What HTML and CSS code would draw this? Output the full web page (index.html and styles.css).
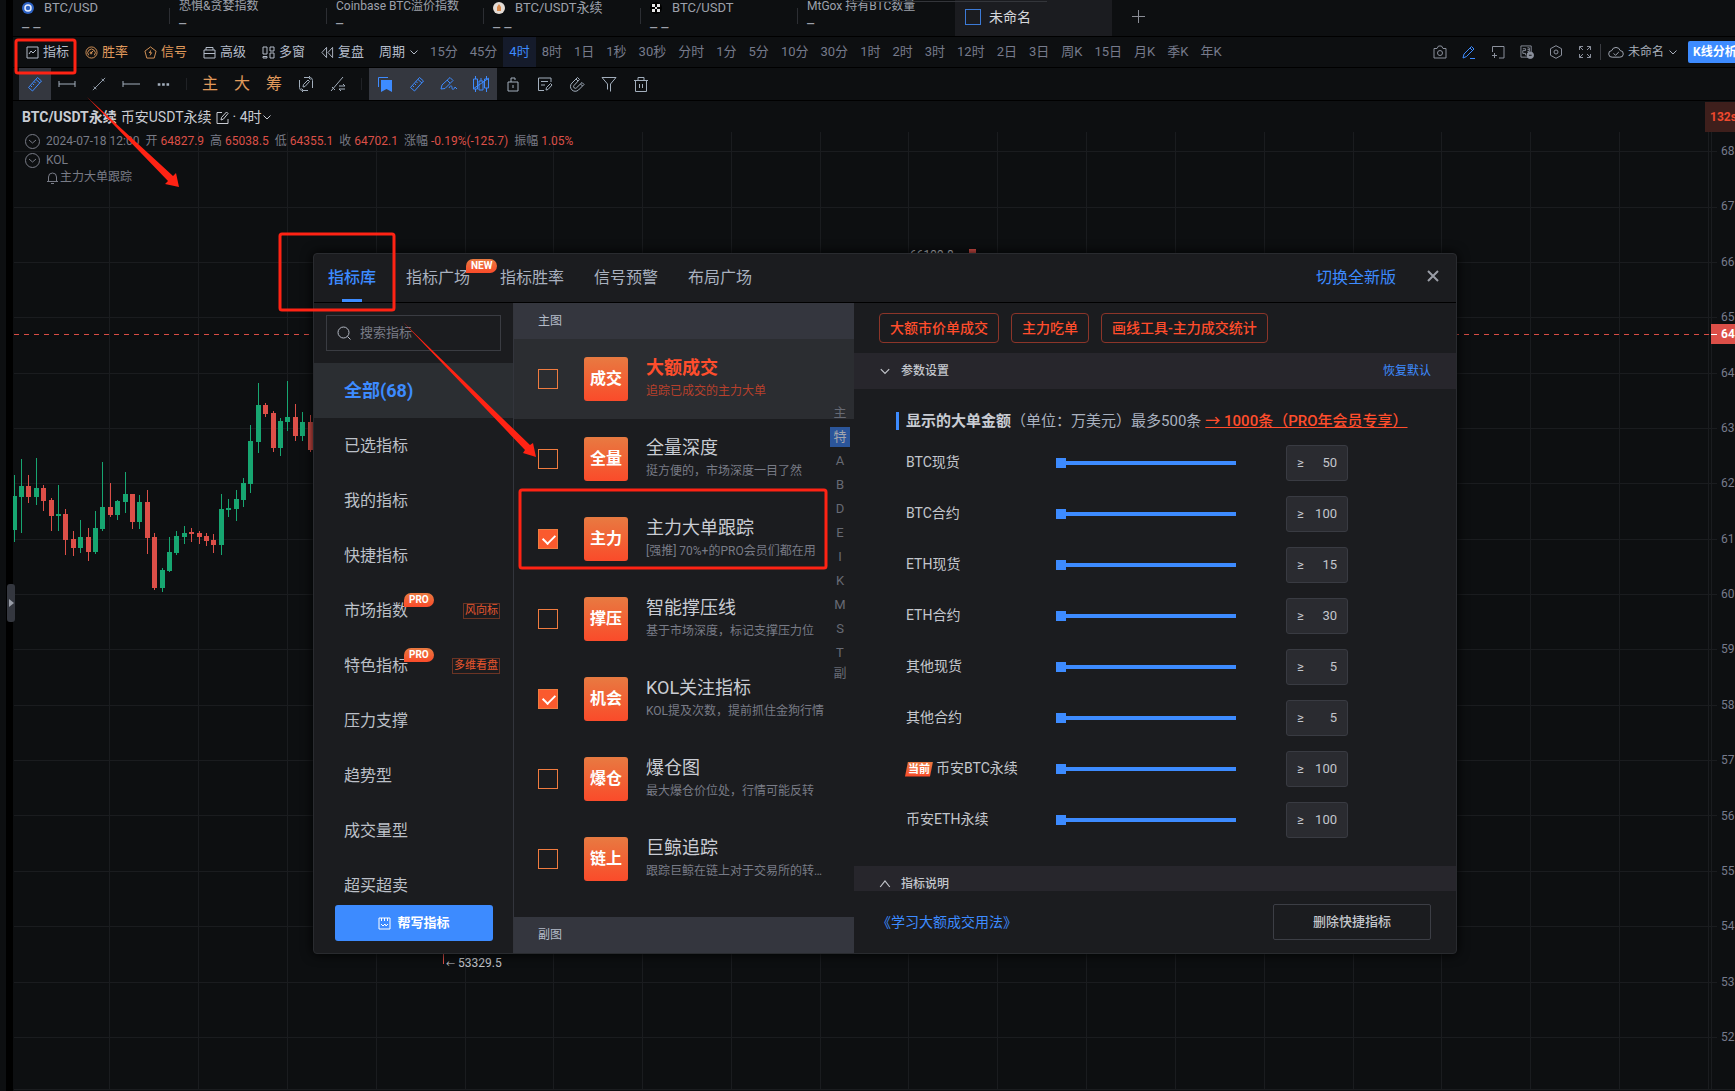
FILE: index.html
```html
<!DOCTYPE html>
<html lang="zh-CN">
<head>
<meta charset="utf-8">
<title>BTC/USDT永续 K线</title>
<link rel="stylesheet" href="styles.css">
</head>
<body>
<svg class="sprite" aria-hidden="true">
  <symbol id="i-box" viewBox="0 0 13 13"><path d="M1 1h11v11H1zM3 8l2-3 2 2 3-3"/></symbol>
  <symbol id="i-gauge" viewBox="0 0 14 14"><circle cx="7" cy="7" r="6"/><path d="M4 10a4 4 0 1 1 6 0M6.500 7.500L9 5"/><circle cx="6.500" cy="7.500" r="1"/></symbol>
  <symbol id="i-bolt" viewBox="0 0 14 14"><path d="M7 1l6 4.500-2 7.500H3L1 5.500z"/><path d="M8 3.500L5 7.500h2L6 11l3-4H7z" fill="currentColor" stroke="none"/></symbol>
  <symbol id="i-case" viewBox="0 0 13 13"><path d="M1 4h11v8H1zM3 4V1.500h7V4M1 7.500h11"/></symbol>
  <symbol id="i-panes" viewBox="0 0 13 13"><path d="M1 1h4v7H1zM1 10.500h4V12H1zM8 1h4v4H8zM8 7h4v5H8z"/></symbol>
  <symbol id="i-rewind" viewBox="0 0 14 13"><path d="M6 1v11L1 6.500zM12.500 1v11l-5-5.500z"/></symbol>
  <symbol id="i-down" viewBox="0 0 10 10"><path d="M1.500 3.500L5 7l3.500-3.500"/></symbol>
  <symbol id="i-up" viewBox="0 0 10 10"><path d="M1 7.500l4-5 4 5"/></symbol>
  <symbol id="i-camera" viewBox="0 0 14 14"><path d="M1 3.500h3L5.500 1h3L10 3.500h3V13H1z"/><circle cx="7" cy="8" r="2.500"/></symbol>
  <symbol id="i-pencil" viewBox="0 0 14 14"><path d="M2 9l7.500-7.500L12 4l-7.500 7.500L1 13zM8 3l2.500 2.500M8 13.500h5"/></symbol>
  <symbol id="i-newpane" viewBox="0 0 14 14"><path d="M1.500 7V1.500H13V13H8M1 10.500h5M3.500 8v5"/></symbol>
  <symbol id="i-alertlist" viewBox="0 0 15 15"><path d="M1 1h11v12H1zM3 4h3v2H3v3h3v2M8 3h2v4H8M8 5h2"/><circle cx="11" cy="11" r="3.500" fill="currentColor"/><path d="M9.500 11h3" stroke="#0d0f11"/></symbol>
  <symbol id="i-hex" viewBox="0 0 14 14"><path d="M7 .700l5.500 3v6.600L7 13.300l-5.500-3V3.700z"/><circle cx="7" cy="7" r="2"/></symbol>
  <symbol id="i-full" viewBox="0 0 14 14"><path d="M1.500 5V1.500H5M1.500 1.500L5 5M9 1.500h3.500V5M12.500 1.500L9 5M1.500 9v3.500H5M1.500 12.500L5 9M9 12.500h3.500V9M12.500 12.500L9 9"/></symbol>
  <symbol id="i-cloud" viewBox="0 0 17 14"><path d="M4.500 12.500a3.500 3.500 0 0 1-.500-7 4.700 4.700 0 0 1 9 0 3.500 3.500 0 0 1-.500 7zM6 8.500l2 2L11.500 7"/></symbol>
  <symbol id="i-ruler" viewBox="0 0 16 16"><path d="M1.500 11.500l9-10 4 3.500-9 10zM9 3.500l4 3.500M3.500 9.500l1.500 1.500M5.500 7.500l1.500 1.500M7 5.500L8.500 7"/></symbol>
  <symbol id="i-hseg" viewBox="0 0 18 16"><path d="M1 8h16M1 5v6M17 5v6"/></symbol>
  <symbol id="i-seg" viewBox="0 0 16 16"><path d="M1 15L15 1M2 11l3 3M11 2l3 3"/></symbol>
  <symbol id="i-ray" viewBox="0 0 18 16"><path d="M1 8h17M1 5v6"/></symbol>
  <symbol id="i-dots" viewBox="0 0 14 16"><path d="M1 7h3v3H1zM6 7h3v3H6zM11 7h3v3h-3z" fill="currentColor" stroke="none"/></symbol>
  <symbol id="i-rotate" viewBox="0 0 16 16"><path d="M6 1.500h5.500a3 3 0 0 1 3 3V12M12.500 3.500l-2-2 2-2M10 14.500H4.500a3 3 0 0 1-3-3V4M3.500 12.500l2 2-2 2M5 11l.500-2.500L10 4l1.500 1.500L7 10.500z"/></symbol>
  <symbol id="i-linecfg" viewBox="0 0 16 16"><path d="M1 15L13 1M2 11l3 3M9 10h6l-2-2M15 13H9l2 2"/></symbol>
  <symbol id="i-mark" viewBox="0 0 16 16"><path d="M1.500 11V1.500H11"/><path d="M4 4h11v12l-5.500-3L4 16z" fill="currentColor" stroke="none"/></symbol>
  <symbol id="i-scribble" viewBox="0 0 18 16"><path d="M1 13l1-4 8-7.500 3 3-8 8zM7 4l3 3M9 12c2-4 3-2 3 0s2 2 3-1l2 2"/></symbol>
  <symbol id="i-candles" viewBox="0 0 18 16"><path d="M1.500 3h4v10h-4zM3.500 0v3M3.500 13v3M7 5h4v9H7zM9 2v3M12.500 3h4v9h-4zM14.500 0v3M14.500 12v4M1 13L17 2"/></symbol>
  <symbol id="i-lock" viewBox="0 0 14 16"><path d="M2 6h10v9H2zM5 6V2h4v2M7 9v3"/></symbol>
  <symbol id="i-note" viewBox="0 0 16 16"><path d="M14 6V2H1.500v12.500H7M4 5.500h7M4 9h4M9 14l.500-2.500 4-4 1.500 1.500-4 4.500z"/></symbol>
  <symbol id="i-magnet" viewBox="0 0 16 16"><path d="M8.500 1.500L3 7a4.700 4.700 0 0 0 6.500 7L15 8.500l-2-2-5.500 5.300a1.700 1.700 0 0 1-2.500-2.300L10.500 3.500zM7 3l2 2M11.500 8l2 2"/></symbol>
  <symbol id="i-funnel" viewBox="0 0 16 16"><path d="M1 1.500h14L9.500 8v7.500M1 1.500L6.500 8v5.500"/></symbol>
  <symbol id="i-trash" viewBox="0 0 16 16"><path d="M1 4.500h14M5 4.500v-3h6v3M2.500 4.500v11h11v-11M6.500 8v4M9.500 8v4"/></symbol>
  <symbol id="i-edit" viewBox="0 0 13 13"><path d="M6 1.500H1v11h11V8M5 9l.500-2.500L10.500 1 12 2.500 7.500 8z"/></symbol>
  <symbol id="i-fold" viewBox="0 0 15 15"><circle cx="7.500" cy="7.500" r="7"/><path d="M4 6l3.500 3L11 6"/></symbol>
  <symbol id="i-bell" viewBox="0 0 13 13"><path d="M1 10.500h11M2.500 10.500V6a4 4 0 0 1 8 0v4.500M5 12.500h3"/></symbol>
  <symbol id="i-search" viewBox="0 0 14 14"><circle cx="6.500" cy="6.500" r="5.500"/><path d="M10.500 10.500L13.500 13.500"/></symbol>
  <symbol id="i-close" viewBox="0 0 12 12"><path d="M1 1l10 10M11 1L1 11"/></symbol>
  <symbol id="i-script" viewBox="0 0 13 13"><path d="M1 1h11v11H1zM3.500 1v3M6.500 1v3M9.500 1v3M3 7l2 2 2-2 1 2 2-2"/></symbol>
</svg>

<aside class="rail"></aside>
<main class="app">
  <nav class="pairs">
    <a class="pair" href="#"><span class="pair-name"><svg class="coin" viewBox="0 0 12 12"><circle cx="6" cy="6" r="6" fill="#2d62c4"/><circle cx="6" cy="6" r="3" fill="none" stroke="#e8eefc" stroke-width="1.500"/></svg>BTC/USD</span><span class="pair-val">_ _</span></a>
    <a class="pair index" href="#"><span class="pair-name">恐惧&amp;贪婪指数</span><span class="pair-val">_</span></a>
    <a class="pair index" href="#"><span class="pair-name">Coinbase BTC溢价指数</span><span class="pair-val">_</span></a>
    <a class="pair" href="#"><span class="pair-name"><svg class="coin" viewBox="0 0 12 12"><circle cx="6" cy="6" r="6" fill="#e4dcd6"/><path d="M4 5l2-3 2 3v4H4z" fill="#d98a4e"/></svg>BTC/USDT永续</span><span class="pair-val">_ _</span></a>
    <a class="pair" href="#"><span class="pair-name"><svg class="coin" viewBox="0 0 12 12"><circle cx="6" cy="6" r="6" fill="#000"/><path d="M2 2h3v3H2zM7 2h3v3H7zM5 5h2v2H5zM2 7h3v3H2zM7 7h3v3H7z" fill="#e6e6e6"/></svg>BTC/USDT</span><span class="pair-val">_ _</span></a>
    <a class="pair index last" href="#"><span class="pair-name">MtGox 持有BTC数量</span><span class="pair-val">_</span></a>
    <a class="pair-active" href="#"><i class="swatch"></i>未命名</a>
    <button class="pair-add" aria-label="新建"><svg class="ico" viewBox="0 0 13 13"><path d="M0 6.500h13M6.500 0v13"/></svg></button>
    <i class="peek"></i>
  </nav>

  <div class="toolbar">
    <button class="tool"><svg class="ico s13"><use href="#i-box"/></svg>指标</button>
    <button class="tool gold"><svg class="ico s13"><use href="#i-gauge"/></svg>胜率</button>
    <button class="tool gold"><svg class="ico s13"><use href="#i-bolt"/></svg>信号</button>
    <button class="tool"><svg class="ico s13"><use href="#i-case"/></svg>高级</button>
    <button class="tool"><svg class="ico s13"><use href="#i-panes"/></svg>多窗</button>
    <button class="tool"><svg class="ico s13"><use href="#i-rewind"/></svg>复盘</button>
    <button class="tool period">周期<svg class="ico s10"><use href="#i-down"/></svg></button>
    <div class="frames">
      <button>15分</button><button>45分</button><button class="on">4时</button><button>8时</button><button>1日</button><button>1秒</button><button>30秒</button><button>分时</button><button>1分</button><button>5分</button><button>10分</button><button>30分</button><button>1时</button><button>2时</button><button>3时</button><button>12时</button><button>2日</button><button>3日</button><button>周K</button><button>15日</button><button>月K</button><button>季K</button><button>年K</button>
    </div>
    <div class="utils">
      <button aria-label="截图"><svg class="ico s14"><use href="#i-camera"/></svg></button>
      <button class="blue" aria-label="画线"><svg class="ico s14"><use href="#i-pencil"/></svg></button>
      <button aria-label="新窗口"><svg class="ico s14"><use href="#i-newpane"/></svg></button>
      <button aria-label="预警"><svg class="ico s14"><use href="#i-alertlist"/></svg></button>
      <button aria-label="设置"><svg class="ico s14"><use href="#i-hex"/></svg></button>
      <button aria-label="全屏"><svg class="ico s14"><use href="#i-full"/></svg></button>
    </div>
    <button class="layout"><svg class="ico s16"><use href="#i-cloud"/></svg>未命名<svg class="ico s10"><use href="#i-down"/></svg></button>
    <button class="analyze">K线分析</button>
  </div>

  <div class="drawbar">
    <button class="on" aria-label="尺"><svg class="ico s16"><use href="#i-ruler"/></svg></button>
    <button aria-label="水平线段"><svg class="ico s18"><use href="#i-hseg"/></svg></button>
    <button aria-label="线段"><svg class="ico s14"><use href="#i-seg"/></svg></button>
    <button aria-label="射线"><svg class="ico s18"><use href="#i-ray"/></svg></button>
    <button aria-label="更多"><svg class="ico s14"><use href="#i-dots"/></svg></button>
    <i class="div"></i>
    <button class="gold">主</button>
    <button class="gold">大</button>
    <button class="gold">筹</button>
    <button aria-label="连续画线"><svg class="ico s16"><use href="#i-rotate"/></svg></button>
    <button aria-label="线设置"><svg class="ico s16"><use href="#i-linecfg"/></svg></button>
    <i class="div"></i>
    <button class="on" aria-label="收藏"><svg class="ico s16"><use href="#i-mark"/></svg></button>
    <button class="on" aria-label="尺子"><svg class="ico s16"><use href="#i-ruler"/></svg></button>
    <button class="on" aria-label="涂鸦"><svg class="ico s18"><use href="#i-scribble"/></svg></button>
    <button class="on" aria-label="K线"><svg class="ico s18"><use href="#i-candles"/></svg></button>
    <button aria-label="锁定"><svg class="ico s16"><use href="#i-lock"/></svg></button>
    <button aria-label="备注"><svg class="ico s16"><use href="#i-note"/></svg></button>
    <button aria-label="磁吸"><svg class="ico s16"><use href="#i-magnet"/></svg></button>
    <button aria-label="筛选"><svg class="ico s16"><use href="#i-funnel"/></svg></button>
    <button aria-label="删除"><svg class="ico s16"><use href="#i-trash"/></svg></button>
  </div>

  <section class="chart">
    <svg class="plot" aria-hidden="true">
      <g transform="translate(-13 -101)">
        <path class="grid" d="M109 132V1089M198 132V1089M287 132V1089M376 132V1089M465 132V1089M553 132V1089M642 132V1089M731 132V1089M820 132V1089M908 132V1089M997 132V1089M1086 132V1089M1175 132V1089M1264 132V1089M1353 132V1089M1441 132V1089M1530 132V1089M1619 132V1089M1708 132V1089M1711 132V1089
        M14 151H1717M14 207H1717M14 262H1717M14 317H1717M14 373H1717M14 428H1717M14 483H1717M14 539H1717M14 594H1717M14 649H1717M14 705H1717M14 760H1717M14 815H1717M14 871H1717M14 926H1717M14 982H1717M14 1037H1717M14 1089H1735"/>
        <path class="price" d="M14 334H1711"/>
        <path class="up" d="M14 475V542M21 459V533M36 458V505M58 485V531M80 520V553M95 511V554M102 462V531M117 500V520M125 472V513M139 495V529M162 568V592M169 537V572M176 531V555M184 526V544M221 494V555M228 499V517M236 490V521M243 478V507M250 425V493M258 383V453M280 418V456M287 381V431M302 412V441"/>
        <path class="up body" d="M14 496V530M21 486V497M36 488V497M58 514V516M80 537V548M95 528V552M102 507V529M117 501V515M125 494V502M139 502V522M162 570V588M169 552V571M176 536V553M184 533V537M221 509V545M228 508V510M236 499V509M243 483V500M250 441V484M258 405V442M280 421V448M287 417V422M302 422V436"/>
        <path class="down" d="M28 475V503M43 485V511M51 498V531M65 509V555M73 531V556M88 528V561M110 483V517M132 494V529M147 490V554M154 533V590M191 528V542M199 531V544M206 533V546M213 534V553M265 403V417M273 411V452M295 404V441M310 415V452M443 950V964"/>
        <path class="down body" d="M28 486V497M43 488V501M51 500V516M65 514V540M73 539V548M88 537V552M110 507V515M132 494V522M147 502V538M154 537V588M191 532V534M199 533V537M206 536V541M213 540V545M265 405V414M273 413V448M295 417V436M310 422V450"/>
        <path class="down body" d="M971 249V256M973 249V256"/>
        <text class="mark" x="910" y="259">66199.8</text>
        <text class="mark" x="446" y="967"><tspan class="arrow">←</tspan> 53329.5</text>
      </g>
    </svg>

    <div class="legend">
      <h1 class="symbol"><b>BTC/USDT永续</b> 币安USDT永续<svg class="ico s13"><use href="#i-edit"/></svg><span class="tf">· 4时<svg class="ico s10"><use href="#i-down"/></svg></span></h1>
      <p class="ohlc"><svg class="ico s15"><use href="#i-fold"/></svg><span>2024-07-18 12:00</span><span>开 <em>64827.9</em></span><span>高 <em>65038.5</em></span><span>低 <em>64355.1</em></span><span>收 <em>64702.1</em></span><span>涨幅 <em>-0.19%(-125.7)</em></span><span>振幅 <em>1.05%</em></span></p>
      <p class="ohlc kol"><svg class="ico s15"><use href="#i-fold"/></svg><span>KOL</span></p>
      <p class="ohlc sub"><svg class="ico s13"><use href="#i-bell"/></svg>主力大单跟踪</p>
    </div>

    <ol class="axis"><li>68</li><li>67</li><li>66</li><li>65</li><li>64</li><li>63</li><li>62</li><li>61</li><li>60</li><li>59</li><li>58</li><li>57</li><li>56</li><li>55</li><li>54</li><li>53</li><li>52</li></ol>
    <span class="countdown">132s</span>
    <span class="last-price">64</span>
    <button class="handle" aria-label="展开"><svg viewBox="0 0 5 8"><path d="M0 0l5 4-5 4z"/></svg></button>

    <section class="dialog" role="dialog" aria-label="指标库">
      <header class="dlg-head">
        <nav class="dlg-tabs">
          <a class="on" href="#">指标库</a><a href="#">指标广场<span class="flag">NEW</span></a><a href="#">指标胜率</a><a href="#">信号预警</a><a href="#">布局广场</a>
        </nav>
        <a class="switch" href="#">切换全新版</a>
        <button class="close" aria-label="关闭"><svg class="ico s12"><use href="#i-close"/></svg></button>
      </header>
      <div class="dlg-body">
        <div class="cats">
          <label class="search"><svg class="ico s14"><use href="#i-search"/></svg><input type="text" placeholder="搜索指标" aria-label="搜索指标"></label>
          <ul class="cat-list">
            <li><a class="on" href="#">全部(68)</a></li>
            <li><a href="#">已选指标</a></li>
            <li><a href="#">我的指标</a></li>
            <li><a href="#">快捷指标</a></li>
            <li><a href="#"><span class="cat">市场指数<span class="flag">PRO</span></span><small>风向标</small></a></li>
            <li><a href="#"><span class="cat">特色指标<span class="flag">PRO</span></span><small>多维看盘</small></a></li>
            <li><a href="#">压力支撑</a></li>
            <li><a href="#">趋势型</a></li>
            <li><a href="#">成交量型</a></li>
            <li><a href="#">超买超卖</a></li>
          </ul>
          <button class="write"><svg class="ico s13"><use href="#i-script"/></svg>帮写指标</button>
        </div>

        <div class="inds">
          <h2 class="group">主图</h2>
          <ul class="ind-list">
            <li><label class="ind hot"><input type="checkbox"><span class="tile">成交</span><span class="txt"><b>大额成交</b><small>追踪已成交的主力大单</small></span></label></li>
            <li><label class="ind"><input type="checkbox"><span class="tile">全量</span><span class="txt"><b>全量深度</b><small>挺方便的，市场深度一目了然</small></span></label></li>
            <li><label class="ind"><input type="checkbox" checked><span class="tile">主力</span><span class="txt"><b>主力大单跟踪</b><small>[强推] 70%+的PRO会员们都在用</small></span></label></li>
            <li><label class="ind"><input type="checkbox"><span class="tile">撑压</span><span class="txt"><b>智能撑压线</b><small>基于市场深度，标记支撑压力位</small></span></label></li>
            <li><label class="ind"><input type="checkbox" checked><span class="tile">机会</span><span class="txt"><b>KOL关注指标</b><small>KOL提及次数，提前抓住金狗行情</small></span></label></li>
            <li><label class="ind"><input type="checkbox"><span class="tile">爆仓</span><span class="txt"><b>爆仓图</b><small>最大爆仓价位处，行情可能反转</small></span></label></li>
            <li><label class="ind"><input type="checkbox"><span class="tile">链上</span><span class="txt"><b>巨鲸追踪</b><small>跟踪巨鲸在链上对于交易所的转入转出</small></span></label></li>
          </ul>
          <h2 class="group">副图</h2>
          <nav class="letters"><a href="#">主</a><a class="on" href="#">特</a><a href="#">A</a><a href="#">B</a><a href="#">D</a><a href="#">E</a><a href="#">I</a><a href="#">K</a><a href="#">M</a><a href="#">S</a><a href="#">T</a><a class="end" href="#">副</a></nav>
        </div>

        <div class="params">
          <div class="scroll">
            <div class="tags"><button>大额市价单成交</button><button>主力吃单</button><button>画线工具-主力成交统计</button></div>
            <div class="fold"><svg class="ico s12"><use href="#i-down"/></svg><h3>参数设置</h3><a href="#">恢复默认</a></div>
            <div class="form">
              <h4 class="form-title"><b>显示的大单金额</b><span>（单位：万美元）</span><span>最多500条</span><a href="#">→ 1000条（PRO年会员专享）</a></h4>
              <div class="row"><label for="r1">BTC现货</label><input id="r1" type="range" value="0"><span class="num">≥<input type="text" value="50" aria-label="BTC现货"></span></div>
              <div class="row"><label for="r2">BTC合约</label><input id="r2" type="range" value="0"><span class="num">≥<input type="text" value="100" aria-label="BTC合约"></span></div>
              <div class="row"><label for="r3">ETH现货</label><input id="r3" type="range" value="0"><span class="num">≥<input type="text" value="15" aria-label="ETH现货"></span></div>
              <div class="row"><label for="r4">ETH合约</label><input id="r4" type="range" value="0"><span class="num">≥<input type="text" value="30" aria-label="ETH合约"></span></div>
              <div class="row"><label for="r5">其他现货</label><input id="r5" type="range" value="0"><span class="num">≥<input type="text" value="5" aria-label="其他现货"></span></div>
              <div class="row"><label for="r6">其他合约</label><input id="r6" type="range" value="0"><span class="num">≥<input type="text" value="5" aria-label="其他合约"></span></div>
              <div class="row"><label for="r7"><span class="now">当前</span>币安BTC永续</label><input id="r7" type="range" value="0"><span class="num">≥<input type="text" value="100" aria-label="币安BTC永续"></span></div>
              <div class="row"><label for="r8">币安ETH永续</label><input id="r8" type="range" value="0"><span class="num">≥<input type="text" value="100" aria-label="币安ETH永续"></span></div>
            </div>
            <div class="fold"><svg class="ico s12"><use href="#i-up"/></svg><h3>指标说明</h3></div>
          </div>
          <footer class="dlg-foot"><a href="#">《学习大额成交用法》</a><button>删除快捷指标</button></footer>
        </div>
      </div>
    </section>
  </section>

  <svg class="notes" aria-hidden="true">
    <g class="frame"><rect x="16" y="40" width="59" height="33" rx="2"/><rect x="280" y="234" width="114" height="76" rx="2"/><rect x="520" y="490" width="306" height="78" rx="2"/></g>
    <path d="M87 97L173 176L176 173L179 187L165 184L168 181z"/>
    <path d="M403 322L530 445L533 443L536 457L523 453L525 450z"/>
  </svg>
</main>
</body>
</html>
```
FILE: styles.css
```css
* { box-sizing: border-box; }
body {
  margin: 0; min-height: 100vh; display: flex; position: relative; overflow: hidden;
  background: #0d0f11; color: #c3c6cc;
  font: 13px/16px Roboto, "Noto Sans CJK SC", sans-serif;
}
ul, ol { margin: 0; padding: 0; list-style: none; }
h1, h2, h3, h4, p { margin: 0; font-weight: 400; }
a { color: inherit; text-decoration: none; }
button { margin: 0; padding: 0; border: 0; background: none; color: inherit; font: inherit; white-space: nowrap; }
input { font: inherit; color: inherit; }
i, em { font-style: normal; }
.sprite { position: absolute; width: 0; height: 0; }

.ico { flex: none; display: block; width: 13px; height: 13px; fill: none; stroke: currentColor; stroke-width: 1; }
.s10 { width: 10px; height: 10px; }
.s12 { width: 12px; height: 12px; }
.s13 { width: 13px; height: 13px; }
.s14 { width: 14px; height: 14px; }
.s15 { width: 15px; height: 15px; }
.s16 { width: 16px; height: 16px; }
.s18 { width: 18px; height: 16px; }

.rail { flex: none; width: 13px; border-right: 7px solid #000; }
.app { flex: 1; min-width: 0; display: flex; flex-direction: column; }

/* symbol tabs */
.pairs { position: relative; display: flex; height: 37px; border-bottom: 1px solid #000; overflow: hidden; color: #9da1ab; }
.pair { flex: none; width: 157px; padding-left: 9px; display: flex; flex-direction: column; font-size: 13px;
  background: linear-gradient(#2c2e33, #2c2e33) right 8px / 1px 16px no-repeat; }
.pair.last { background: none; }
.pair-name { display: flex; align-items: center; gap: 10px; height: 16px; white-space: nowrap; }
.pair-val { height: 16px; font-size: 16px; line-height: 12px; }
.pair.index { font-size: 12px; }
.pair.index .pair-name { height: 12px; }
.coin { width: 12px; height: 12px; }
.pair-active { display: flex; align-items: center; gap: 8px; width: 157px; padding: 0 10px 3px; background: #1b1c20; font-size: 14px; color: #d6d8dc; }
.swatch { width: 16px; height: 16px; border: 1px solid #3c7ad6; }
.pair-add { padding: 0 20px 3px; color: #8a8d96; }
.peek { position: absolute; top: 0; left: 837px; width: 197px; height: 2px; border-bottom: 1px solid #33353a; border-left: 1px solid #33353a; }

/* toolbar */
.toolbar { display: flex; align-items: center; height: 31px; padding-left: 13px; border-bottom: 1px solid #000; color: #b4bcc9; overflow: hidden; }
.tool { display: flex; align-items: center; gap: 4px; margin-right: 16px; }
.tool.period { margin: 0 5px 0 -1px; }
.gold { color: #e09a5c; }
.frames { flex: 1; display: flex; align-self: stretch; color: #777b8c; }
.frames button { padding: 0 6px; }
.frames .on { background: #151b2b; color: #3d8bff; }
.utils { display: flex; gap: 15px; padding-right: 8px; color: #8b909c; }
.blue { color: #3d8bff; }
.layout { display: flex; align-items: center; gap: 4px; height: 16px; padding: 0 10px 0 7px; border-left: 1px solid #3a3c42; font-size: 12px; color: #a9afbb; }
.analyze { width: 47px; height: 22px; padding-left: 5px; background: #3d8bff; border-radius: 2px 0 0 2px; color: #fff; font-size: 12px; font-weight: 700; overflow: hidden; text-align: left; }

.drawbar { display: flex; align-items: center; height: 33px; padding-left: 6px; border-bottom: 1px solid #000; color: #a3afbd; }
.drawbar button { display: grid; place-items: center; width: 32px; height: 32px; font-size: 16px; }
.drawbar .on { background: #34373f; color: #3d8bff; }
.drawbar .gold { color: #e09a5c; }
.div { width: 1px; height: 12px; margin: 0 7px; background: #202226; }

/* chart */
.chart { position: relative; flex: 1; min-height: 700px; }
.plot { position: absolute; inset: 0; width: 100%; height: 100%; }
.plot path { fill: none; shape-rendering: crispEdges; }
.grid { stroke: #1a1c1f; }
.price { stroke: #d94d45; stroke-dasharray: 5 5; }
.up { stroke: #17a671; }
.down { stroke: #dc4f48; }
.plot .body { stroke-width: 5px; }
.mark { fill: #c3c6cc; font-size: 12px; }
.arrow { font-size: 9px; }
.legend { position: relative; padding: 8px 0 0 9px; color: #787b86; font-size: 12px; }
.symbol { display: flex; align-items: center; height: 16px; font-size: 14px; color: #c9ccd3; gap: 4px; margin-bottom: 8px; }
.symbol b { font-size: 14px; }
.tf { display: flex; align-items: center; }
.ohlc { display: flex; align-items: center; gap: 6px; height: 16px; padding-left: 3px; white-space: nowrap; }
.kol { margin: 3px 0 1px; }
.ohlc em { color: #dc4f48; }
.ohlc.sub { padding-left: 24px; gap: 1px; }
.axis { position: absolute; top: 42px; right: 0; bottom: 46px; width: 14px; display: flex; flex-direction: column; justify-content: space-between; font-size: 12px; color: #777b8c; }
.countdown, .last-price { position: absolute; right: 0; overflow: hidden; font-weight: 700; }
.countdown { top: 1px; width: 30px; height: 30px; padding-left: 5px; font-size: 12px; line-height: 30px; background: #3e1f1c; color: #f0492e; }
.last-price { top: 223px; width: 24px; height: 20px; padding-left: 10px; font-size: 12px; line-height: 20px; color: #fff; background: linear-gradient(#fff, #fff) 0 10px / 6px 1px no-repeat #dc4f48; }
.handle { position: absolute; left: -6px; top: 483px; width: 8px; height: 38px; background: #34373f; border-radius: 3px; display: grid; place-items: center; }
.handle svg { width: 5px; height: 8px; fill: #9a9ea8; }

/* indicator dialog */
.dialog { position: absolute; left: 300px; top: 152px; width: 1144px; height: 701px; display: flex; flex-direction: column; background: #1b1c1f; border: 1px solid #292b2f; border-radius: 4px; box-shadow: 0 0 12px #000; overflow: hidden; }
.dlg-head { display: flex; align-items: center; height: 49px; padding: 0 17px 0 14px; border-bottom: 1px solid #000; font-size: 16px; }
.dlg-tabs { flex: 1; display: flex; gap: 30px; line-height: 48px; color: #a9b1bf; }
.dlg-tabs a { position: relative; }
.dlg-tabs .on { color: #3d8bff; font-weight: 500; background: linear-gradient(#3d8bff, #3d8bff) center bottom / 20px 3px no-repeat; }
.flag { position: absolute; left: 100%; top: 5px; height: 14px; margin-left: -4px; padding: 0 5px; border-radius: 7px 7px 7px 0; background: linear-gradient(#e87a41, #fa4b2a); color: #fff; font-size: 10px; line-height: 14px; font-weight: 700; }
.switch { color: #3d8bff; }
.close { margin: 0 0 4px 31px; color: #9a9da6; }
.close .ico { stroke-width: 2; }

.dlg-body { flex: 1; min-height: 0; display: flex; }
.cats { flex: none; width: 199px; display: flex; flex-direction: column; }
.search { display: flex; align-items: center; gap: 9px; height: 36px; margin: 12px; padding: 0 10px; border: 1px solid #3a3c42; color: #b4b9c4; }
.search input { flex: 1; min-width: 0; padding: 0; border: 0; background: none; }
.search input::placeholder { color: #787b86; opacity: 1; }
.cat-list { flex: 1; min-height: 0; overflow: hidden; font-size: 16px; color: #bcc0c8; }
.cat-list a { display: flex; align-items: center; justify-content: space-between; height: 55px; padding: 0 13px 0 30px; }
.cat-list .on { background: #2b2e32; color: #3d8bff; font-size: 18px; font-weight: 700; }
.cat { position: relative; }
.cat .flag { top: -10px; }
.cat-list small { padding: 0 1px; border: 1px solid #6b3424; color: #e8562e; font-size: 11px; line-height: 14px; }
.write { display: flex; align-items: center; justify-content: center; gap: 6px; height: 36px; margin: 12px 20px 12px 21px; border-radius: 3px; background: #3d8bff; color: #fff; font-weight: 700; }

.inds { flex: none; position: relative; width: 341px; display: flex; flex-direction: column; border-left: 1px solid #33353c; }
.group { flex: none; height: 36px; padding-left: 24px; background: #34363e; font-size: 12px; line-height: 36px; color: #b4bcc9; }
.ind-list { flex: 1; min-height: 0; overflow: hidden; }
.ind { display: flex; align-items: center; height: 80px; padding-left: 24px; }
.ind input { appearance: none; width: 20px; height: 20px; margin: 0 26px 0 0; border: 1px solid #f07b3f; }
.ind input:checked { background: #fa5a2e; }
.ind input:checked::before { content: ""; display: block; width: 6px; height: 10px; margin: 2px 0 0 6px; border: solid #fff; border-width: 0 2px 2px 0; transform: rotate(45deg); }
.tile { width: 44px; height: 44px; margin-right: 18px; border-radius: 3px; background: linear-gradient(#e87a41, #fa4b2a); color: #fff; font-size: 16px; line-height: 44px; font-weight: 700; text-align: center; }
.txt { display: flex; flex-direction: column; gap: 3px; width: 182px; padding-bottom: 4px; }
.txt b { font-size: 18px; line-height: 24px; font-weight: 400; color: #c9ccd3; }
.txt small { font-size: 12px; line-height: 16px; color: #787b86; white-space: nowrap; overflow: hidden; text-overflow: ellipsis; }
.hot { background: #2b2d31; }
.hot .txt b { color: #ff4d2c; font-weight: 700; }
.hot .txt small { color: #b8402c; }
.letters { position: absolute; top: 100px; right: 4px; width: 20px; text-align: center; color: #676a74; }
.letters a { display: block; height: 20px; margin-bottom: 4px; line-height: 20px; }
.letters .on { background: #2b559a; color: #a3a6ad; }
.letters .end { margin-top: -4px; }

.params { flex: 1; min-width: 0; display: flex; flex-direction: column; }
.scroll { flex: 1; min-height: 0; overflow: hidden; }
.tags { display: flex; gap: 12px; padding: 10px 25px; }
.tags button { height: 30px; padding: 0 10px; border: 1px solid #8c3529; border-radius: 4px; color: #ff4d2c; font-size: 14px; font-weight: 500; }
.fold { display: flex; align-items: center; gap: 10px; height: 36px; padding: 0 25px; background: #27262c; font-size: 12px; }
.fold h3 { flex: 1; font-size: 12px; font-weight: 500; }
.fold a { color: #3d8bff; }
.form { padding: 23px 0 21px 42px; font-size: 14px; }
.form-title { display: flex; height: 18px; margin-bottom: 7px; padding-left: 7px; border-left: 3px solid #3d8bff; font-size: 15px; line-height: 18px; color: #a9b1bf; white-space: nowrap; }
.form-title b { color: #c9ccd3; }
.form-title a { margin-left: 4px; color: #ff4d2c; text-decoration: underline; font-weight: 500; }
.row { display: flex; align-items: center; height: 51px; padding-left: 10px; }
.row label { width: 150px; padding-bottom: 1px; }
.row input[type=range] { appearance: none; width: 180px; height: 10px; margin: 0 50px 0 0; background: linear-gradient(#3d8bff, #3d8bff) center / 100% 4px no-repeat; }
.row input[type=range]::-webkit-slider-thumb { appearance: none; width: 10px; height: 10px; background: #3d8bff; }
.num { display: flex; align-items: center; width: 62px; height: 36px; padding: 0 10px; border: 1px solid #393b42; border-radius: 3px; background: #2a2b30; font-size: 13px; }
.num input { flex: 1; min-width: 0; width: 0; padding: 0; border: 0; background: none; text-align: right; }
.now { display: inline-block; margin: 0 3px 0 -1px; padding: 0 3px; background: linear-gradient(#e87a41, #fa4b2a); clip-path: polygon(3px 0, 100% 0, calc(100% - 3px) 100%, 0 100%); color: #fff; font-size: 11px; line-height: 15px; font-weight: 700; }
.dlg-foot { display: flex; align-items: center; justify-content: space-between; height: 62px; padding: 0 25px 0 23px; font-size: 14px; }
.dlg-foot a { color: #3d8bff; }
.dlg-foot button { width: 158px; height: 36px; border: 1px solid #3c3e45; border-radius: 2px; font-size: 13px; font-weight: 500; }

/* marker frames and arrows over the page */
.notes { position: absolute; inset: 0; width: 100%; height: 100%; pointer-events: none; fill: #ff2314; }
.frame { fill: none; stroke: #ff2314; stroke-width: 3px; }
```
